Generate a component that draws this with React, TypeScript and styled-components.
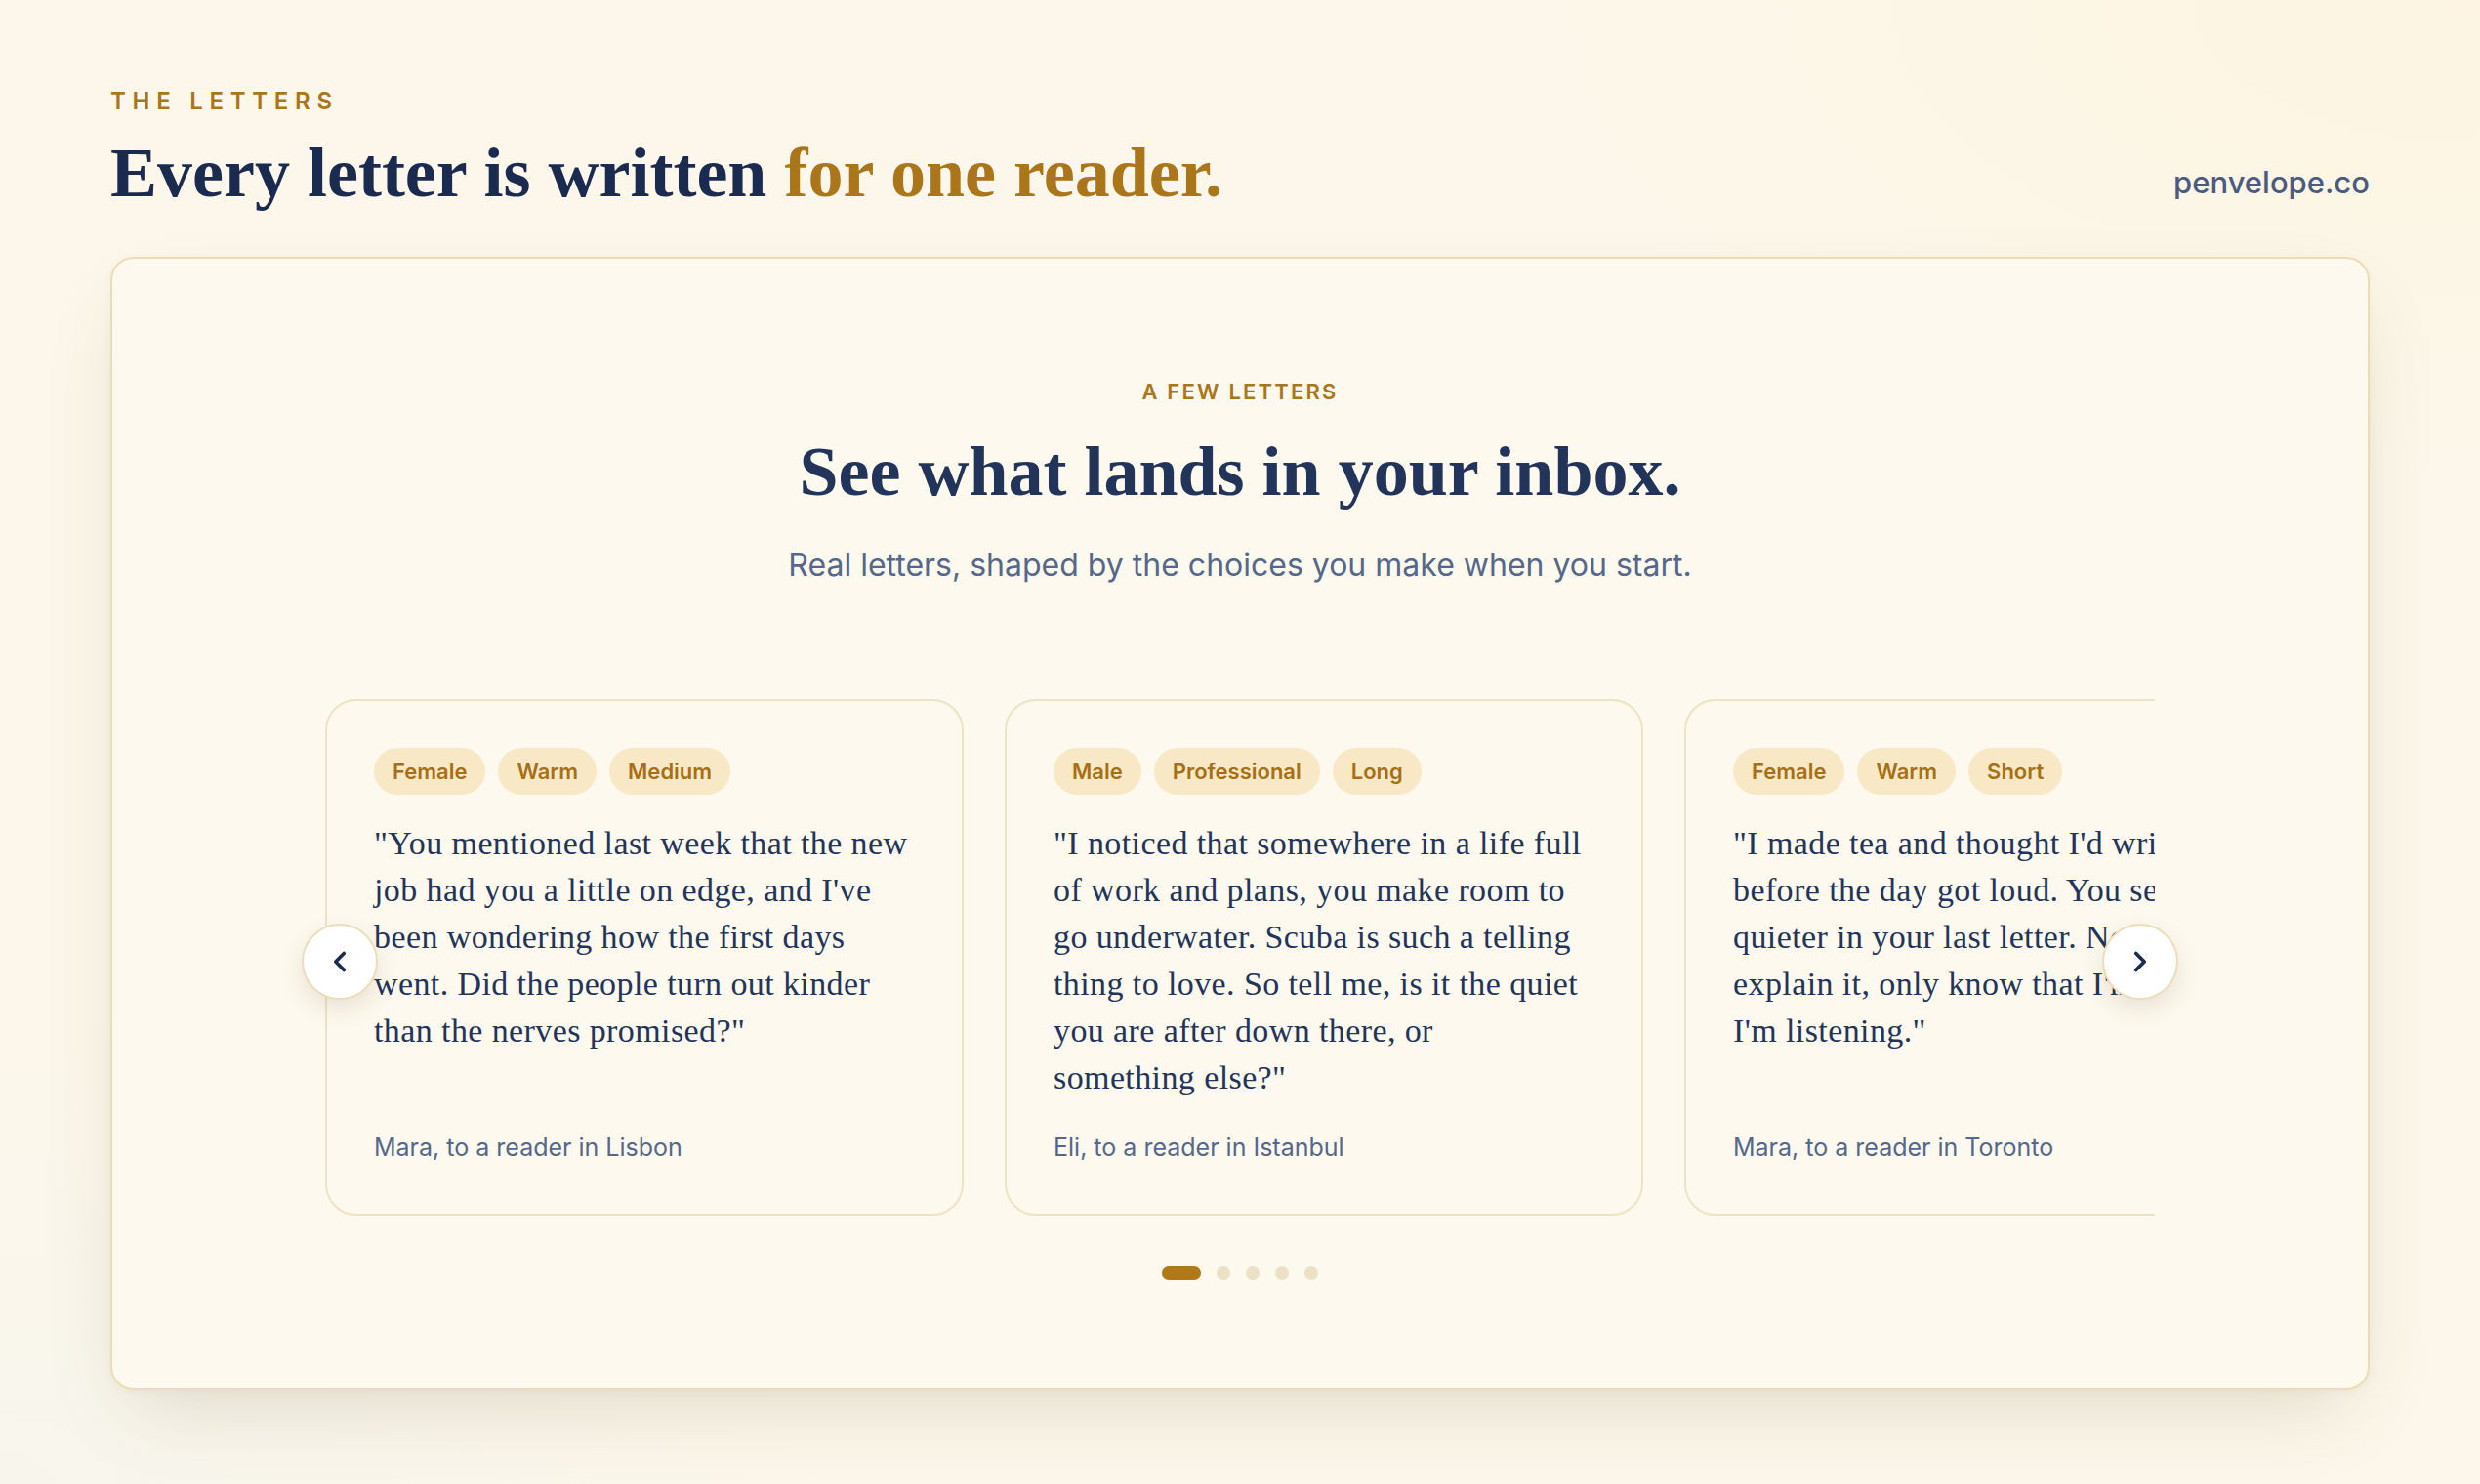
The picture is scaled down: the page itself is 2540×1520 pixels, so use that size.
import * as React from 'react';
import styled, { createGlobalStyle } from 'styled-components';
import { ChevronLeft, ChevronRight } from 'lucide-react';

const GlobalStyle = createGlobalStyle`
  html, body {
    margin: 0;
    padding: 0;
  }

  body {
    background: #fcf7ea;
    font-family: Inter, 'Liberation Sans', sans-serif;
    -webkit-font-smoothing: antialiased;
  }
`;

const serif = `'Liberation Serif', 'DejaVu Serif', serif`;

const colors = {
  navy: '#1b2b4f',
  ink: '#22345a',
  gold: '#ab751a',
  slate: '#55678a',
  line: '#ecdcb6',
  paper: '#fdf9ee',
  tagBack: '#f8e8c5',
};

const Page = styled.div`
  min-height: 1520px;
  box-sizing: border-box;
  padding: 92px 113px 0;
  background:
    radial-gradient(ellipse 1400px 700px at 100% 0%, rgba(253, 243, 220, 0.6), transparent 70%),
    radial-gradient(ellipse 1200px 700px at 0% 100%, rgba(247, 245, 237, 0.9), transparent 70%),
    #fcf7ea;
`;

const Header = styled.header`
  display: flex;
  flex-direction: row;
  align-items: flex-end;
  justify-content: space-between;
`;

const HeaderText = styled.div`
  display: flex;
  flex-direction: column;
  gap: 22px;
`;

const Eyebrow = styled.div`
  font-size: 24px;
  line-height: 1;
  font-weight: 600;
  letter-spacing: 0.28em;
  color: ${colors.gold};
`;

const PageTitle = styled.h1`
  margin: 0;
  font-family: ${serif};
  font-size: 72px;
  line-height: 1.1;
  font-weight: 700;
  letter-spacing: 0;
  color: ${colors.navy};
`;

const Accent = styled.span`
  color: ${colors.gold};
`;

const SiteLink = styled.div`
  font-size: 31px;
  line-height: 1.2;
  font-weight: 500;
  color: #4a5b80;
  margin-bottom: 12px;
`;

const Panel = styled.section`
  margin-top: 46px;
  border: 2px solid ${colors.line};
  border-radius: 24px;
  background: ${colors.paper};
  box-shadow: 0 34px 80px -24px rgba(96, 80, 40, 0.18), 0 2px 8px rgba(96, 80, 40, 0.04);
  padding: 123px 0 111px;
  display: flex;
  flex-direction: column;
  align-items: center;
`;

const Kicker = styled.div`
  font-size: 22px;
  line-height: 1.2;
  font-weight: 600;
  letter-spacing: 0.1em;
  color: ${colors.gold};
`;

const PanelTitle = styled.h2`
  margin: 29px 0 0;
  font-family: ${serif};
  font-size: 72px;
  line-height: 1.1;
  font-weight: 700;
  letter-spacing: 0;
  color: ${colors.ink};
`;

const PanelLead = styled.p`
  margin: 34px 0 0;
  font-size: 32px;
  line-height: 1.4;
  color: ${colors.slate};
`;

const Carousel = styled.div`
  position: relative;
  width: 1874px;
  margin-top: 114px;
`;

const Viewport = styled.div`
  overflow: hidden;
`;

const Track = styled.div`
  display: flex;
  flex-direction: row;
  gap: 42px;
  align-items: stretch;
`;

const LetterCard = styled.article`
  flex: 0 0 654px;
  box-sizing: border-box;
  border: 2px solid #efe2c3;
  border-radius: 32px;
  padding: 48px 48px 53px;
  display: flex;
  flex-direction: column;
`;

const Tags = styled.div`
  display: flex;
  flex-direction: row;
  gap: 13px;
`;

const Tag = styled.span`
  padding: 10px 19px;
  border-radius: 999px;
  background: ${colors.tagBack};
  color: #a66f16;
  font-size: 22px;
  line-height: 28px;
  font-weight: 600;
`;

const Quote = styled.p`
  margin: 26px 0 32px;
  font-family: ${serif};
  font-size: 34px;
  line-height: 48px;
  letter-spacing: 0.4px;
  white-space: nowrap;
  color: ${colors.ink};
`;

const Signature = styled.div`
  margin-top: auto;
  font-size: 25px;
  line-height: 30px;
  color: ${colors.slate};
`;

const ArrowButton = styled.button<{ $side: 'left' | 'right' }>`
  position: absolute;
  top: 50%;
  ${props => props.$side}: -24px;
  width: 78px;
  height: 78px;
  margin-top: -34px;
  border-radius: 50%;
  border: 2px solid #eddcb9;
  background: #ffffff;
  color: ${colors.navy};
  box-shadow: 0 10px 24px rgba(80, 64, 30, 0.12);
  display: flex;
  align-items: center;
  justify-content: center;
  padding: 0;
  cursor: pointer;
`;

const Dots = styled.div`
  margin-top: 52px;
  display: flex;
  flex-direction: row;
  gap: 16px;
  align-items: center;
`;

const Dot = styled.span<{ $active?: boolean }>`
  width: ${props => props.$active ? '40px' : '14px'};
  height: 14px;
  border-radius: 7px;
  background: ${props => props.$active ? '#b07818' : '#ece0c5'};
`;

type Letter = {
  tags: string[];
  lines: string[];
  from: string;
};

// lines are set by hand so every preview keeps its letter-like shape
const letters: Letter[] = [
  {
    tags: ['Female', 'Warm', 'Medium'],
    lines: [
      '"You mentioned last week that the new',
      'job had you a little on edge, and I\'ve',
      'been wondering how the first days',
      'went. Did the people turn out kinder',
      'than the nerves promised?"',
    ],
    from: 'Mara, to a reader in Lisbon',
  },
  {
    tags: ['Male', 'Professional', 'Long'],
    lines: [
      '"I noticed that somewhere in a life full',
      'of work and plans, you make room to',
      'go underwater. Scuba is such a telling',
      'thing to love. So tell me, is it the quiet',
      'you are after down there, or',
      'something else?"',
    ],
    from: 'Eli, to a reader in Istanbul',
  },
  {
    tags: ['Female', 'Warm', 'Short'],
    lines: [
      '"I made tea and thought I\'d write',
      'before the day got loud. You seemed',
      'quieter in your last letter. No need to',
      'explain it, only know that I\'m here.',
      'I\'m listening."',
    ],
    from: 'Mara, to a reader in Toronto',
  },
];

export default function App() {
  const [index, setIndex] = React.useState(0);

  return (
    <>
      <GlobalStyle />
      <Page>
        <Header>
          <HeaderText>
            <Eyebrow>THE LETTERS</Eyebrow>
            <PageTitle>Every letter is written <Accent>for one reader.</Accent></PageTitle>
          </HeaderText>
          <SiteLink>penvelope.co</SiteLink>
        </Header>
        <Panel>
          <Kicker>A FEW LETTERS</Kicker>
          <PanelTitle>See what lands in your inbox.</PanelTitle>
          <PanelLead>Real letters, shaped by the choices you make when you start.</PanelLead>
          <Carousel>
            <Viewport>
              <Track>
                {letters.map((l, i) => <LetterCard key={i}>
                  <Tags>
                    {l.tags.map(t => <Tag key={t}>{t}</Tag>)}
                  </Tags>
                  <Quote>
                    {l.lines.map((line, n) => <React.Fragment key={n}>
                      {n > 0 && <br />}
                      {line}
                    </React.Fragment>)}
                  </Quote>
                  <Signature>{l.from}</Signature>
                </LetterCard>)}
              </Track>
            </Viewport>
            <ArrowButton $side="left" aria-label="Previous" onClick={() => setIndex(Math.max(0, index - 1))}>
              <ChevronLeft size={34} strokeWidth={2.6} />
            </ArrowButton>
            <ArrowButton $side="right" aria-label="Next" onClick={() => setIndex(Math.min(4, index + 1))}>
              <ChevronRight size={34} strokeWidth={2.6} />
            </ArrowButton>
          </Carousel>
          <Dots>
            {[0, 1, 2, 3, 4].map(d => <Dot key={d} $active={d == index} />)}
          </Dots>
        </Panel>
      </Page>
    </>
  );
}
